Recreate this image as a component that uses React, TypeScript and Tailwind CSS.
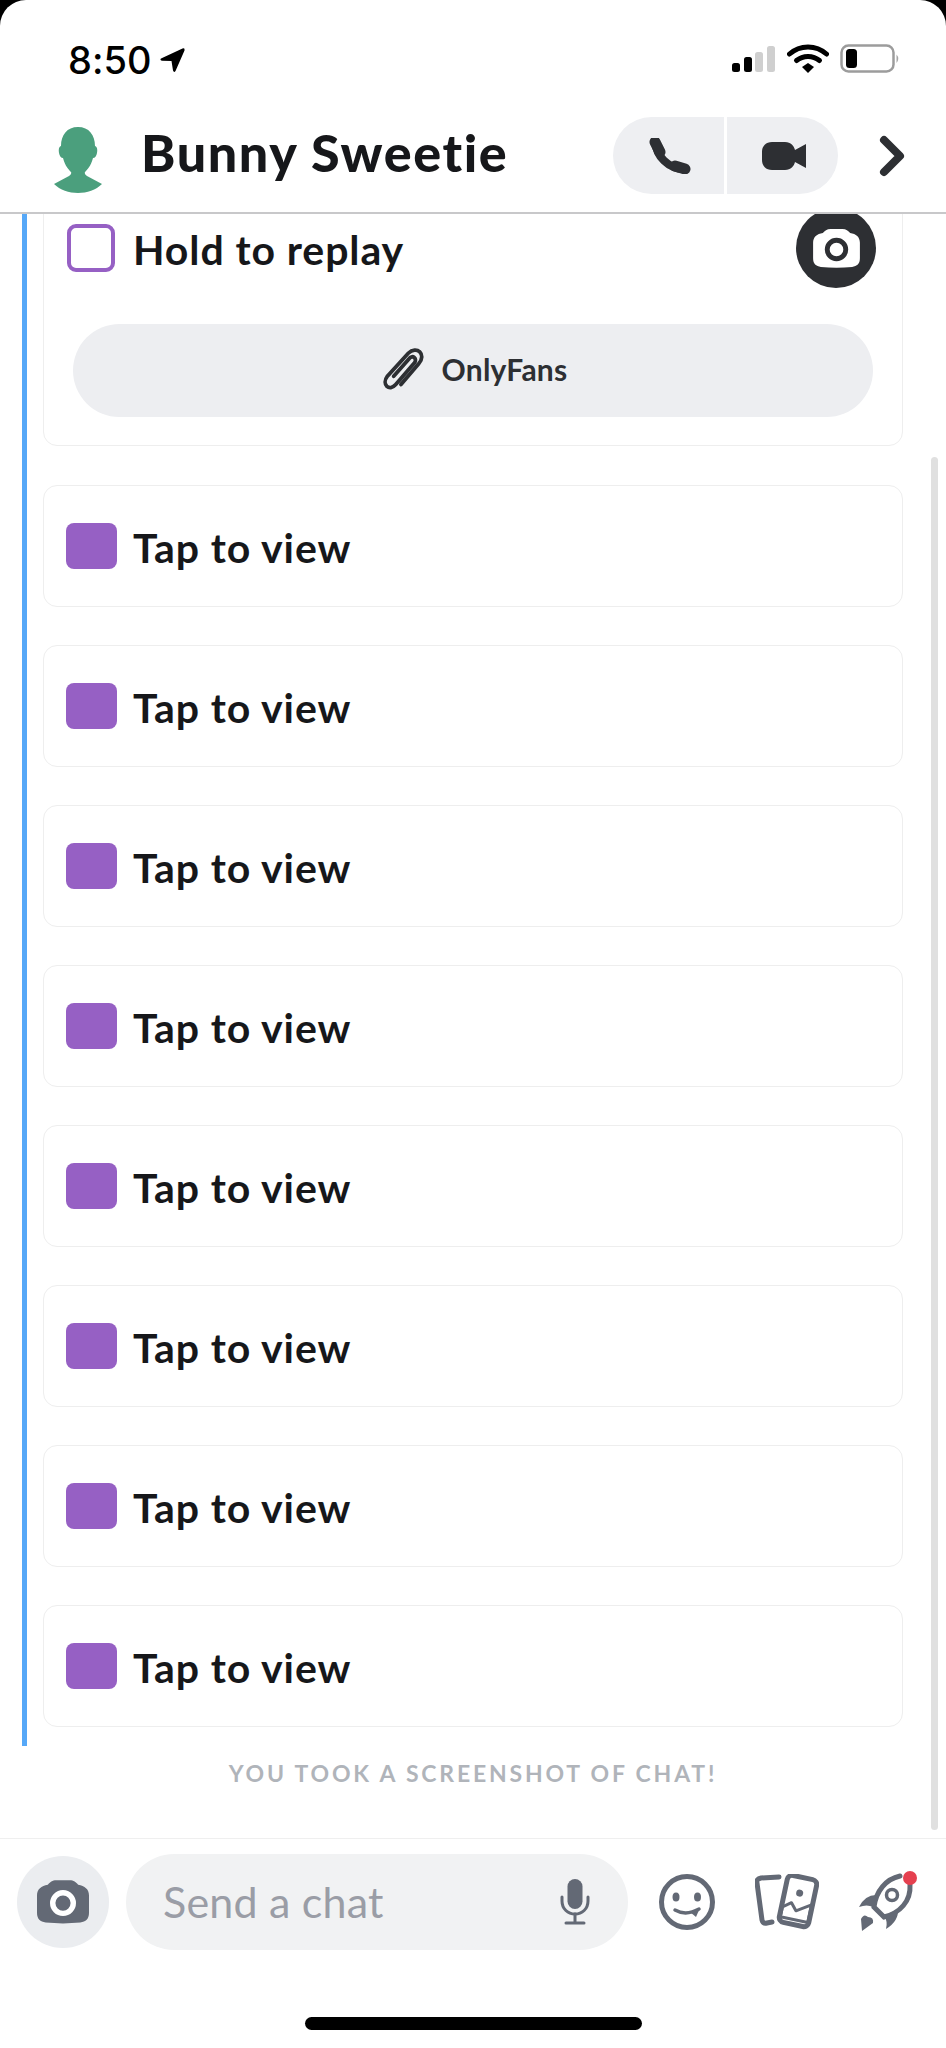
import React from "react";

const LocationArrow = () => (
  <svg width="26" height="26" viewBox="0 0 26 26" className="ml-[9px]">
    <path d="M1 11.500 L22.500 1.500 Q25 0.800 24.500 3.500 L15.500 24 Q14 26 13 23.500 L11.500 14 L2 13.800 Q-0.500 12.800 1 11.500Z" fill="#000" />
  </svg>
);

const StatusIcons = () => (
  <div className="flex items-center">
    <svg width="44" height="28" viewBox="0 0 44 28">
      <rect x="0" y="18" width="8" height="9" rx="2.500" fill="#000" />
      <rect x="12" y="12" width="8" height="15" rx="2.500" fill="#000" />
      <rect x="23" y="7" width="8" height="20" rx="2.500" fill="#cfcfcf" />
      <rect x="35" y="1" width="8" height="26" rx="2.500" fill="#cfcfcf" />
    </svg>
    <svg width="42" height="30" viewBox="0 0 42 30" className="ml-[11px]">
      <path d="M2.500 10 C13 0.500 29 0.500 39.500 10" fill="none" stroke="#000" strokeWidth="5" strokeLinecap="round" />
      <path d="M9.500 16.500 C16 11 26 11 32.500 16.500" fill="none" stroke="#000" strokeWidth="5" strokeLinecap="round" />
      <path d="M15 23 L21 19 L27 23 L21 29Z" fill="#000" />
    </svg>
    <svg width="62" height="30" viewBox="0 0 62 30" className="ml-[11px]">
      <rect x="1.500" y="1.500" width="52" height="26" rx="7" fill="none" stroke="#9c9c9c" strokeWidth="2.500" />
      <rect x="6" y="5" width="11" height="19" rx="3.500" fill="#000" />
      <path d="M56.500 10.500 Q60 14.500 56.500 19Z" fill="#a5a5a5" />
    </svg>
  </div>
);

const Avatar = () => (
  <svg width="48" height="66" viewBox="0 0 48 66" className="mt-[8px] shrink-0">
    <path d="M24 0 C35 0 41 8 41 19 Q44 20 43 26 Q42 31 39 31 C37 39 33 43 31 45 Q30 47 33 49 L48 57 C36 69 12 69 0 57 L15 49 Q18 47 17 45 C15 43 11 39 9 31 Q6 31 5 26 Q4 20 7 19 C7 8 13 0 24 0Z" fill="#4b9f7d" />
  </svg>
);

const PhoneIcon = () => (
  <svg width="42" height="36" viewBox="0 0 42 36">
    <path d="M7 6 C7 17 19 31 35 31" fill="none" stroke="#2d2f33" strokeWidth="8" strokeLinecap="round" />
    <path d="M6 4 L11 14" fill="none" stroke="#2d2f33" strokeWidth="11" strokeLinecap="round" />
    <path d="M26 28 L36 31" fill="none" stroke="#2d2f33" strokeWidth="11" strokeLinecap="round" />
  </svg>
);

const VideoIcon = () => (
  <svg width="44" height="28" viewBox="0 0 44 28">
    <path d="M10 0 H23 C29 0 32 4 33 8 L44 2 V26 L33 20 C32 24 29 28 23 28 H10 C4 28 0 24 0 18 V10 C0 4 4 0 10 0Z" fill="#2d2f33" />
  </svg>
);

const Chevron = () => (
  <svg width="26" height="42" viewBox="0 0 26 42">
    <path d="M5 5 L21 21 L5 37" fill="none" stroke="#2d2f33" strokeWidth="8" strokeLinecap="round" strokeLinejoin="round" />
  </svg>
);

const CameraGlyph = ({ body, hole, w, h }: { body: string; hole: string; w: number; h: number }) => (
  <svg width={w} height={h} viewBox="0 0 48 40">
    <path d="M18 0 H30 C34 0 36 2 38 4 C44 5 48 8 48 14 V30 C48 36 45 38 40 39 Q24 40.500 8 39 C3 38 0 36 0 30 V14 C0 8 4 5 10 4 C12 2 14 0 18 0Z" fill={body} />
    <circle cx="24" cy="21" r="9.500" fill="none" stroke={hole} strokeWidth="5" />
  </svg>
);

const Paperclip = () => (
  <svg width="46" height="48" viewBox="0 0 44 46">
    <path d="M14 28 L29 11 C32 7 37 11 34 15 L16 36 C10 43 2 36 8 28 L28 6 C36 -2 46 7 38 16 L21 36" fill="none" stroke="#2d2f33" strokeWidth="3.600" strokeLinecap="round" />
  </svg>
);

const Mic = () => (
  <svg width="30" height="46" viewBox="0 0 30 46">
    <rect x="7.500" y="0" width="15" height="30" rx="7.500" fill="#636975" />
    <path d="M2 18 V22 C2 30 8 35 15 35 C22 35 28 30 28 22 V18" fill="none" stroke="#636975" strokeWidth="3" strokeLinecap="round" />
    <path d="M15 35 V44 M6 44 H24" fill="none" stroke="#636975" strokeWidth="3" strokeLinecap="round" />
  </svg>
);

const Smiley = () => (
  <svg width="58" height="58" viewBox="0 0 58 58">
    <circle cx="29" cy="29" r="25.500" fill="none" stroke="#636975" strokeWidth="5" />
    <ellipse cx="18" cy="24" rx="3.500" ry="4.500" fill="#636975" />
    <ellipse cx="39.500" cy="24" rx="3.500" ry="4.500" fill="#636975" />
    <path d="M17 37 C24 41 32 41 41 36" fill="none" stroke="#636975" strokeWidth="3.500" strokeLinecap="round" />
    <path d="M32 39 L42 35 L38 44Z" fill="#636975" />
  </svg>
);

const Cards = () => (
  <svg width="64" height="56" viewBox="0 0 64 56">
    <path d="M24 3 L6 4 Q1 5 2 9 L7 46 Q8 50 12 49 L17 48" fill="none" stroke="#636975" strokeWidth="5" strokeLinecap="round" strokeLinejoin="round" />
    <g transform="rotate(12 43 27)">
      <rect x="28" y="3" width="30" height="48" rx="5" fill="none" stroke="#636975" strokeWidth="5" />
      <circle cx="43" cy="19" r="3.500" fill="#636975" />
      <path d="M29 36 L37 30 L43 37 L57 28 V46 H29Z" fill="none" stroke="#636975" strokeWidth="3" strokeLinejoin="round" />
    </g>
  </svg>
);

const Rocket = () => (
  <div className="relative h-[62px] w-[60px]">
    <svg width="60" height="62" viewBox="0 0 60 62">
      <path d="M42 5 C28 8 18 20 16 36 L26 46 C42 42 53 30 52 14" fill="none" stroke="#636975" strokeWidth="5" strokeLinecap="round" />
      <circle cx="34" cy="24" r="5.500" fill="none" stroke="#636975" strokeWidth="3.500" />
      <path d="M18 24 Q7 24 1 36 Q9 33 15 36Z" fill="#636975" />
      <path d="M40 38 Q41 50 28 58 Q30 50 26 45Z" fill="#636975" />
      <path d="M4 60 L3 48 Q6 42 10 46 Q16 46 15 52Z" fill="#636975" />
    </svg>
    <div className="absolute top-[0px] right-[1px] h-[14px] w-[14px] rounded-full bg-[#e5404f]" />
  </div>
);

const TapCard = () => (
  <div className="flex h-[122px] items-center rounded-[14px] border border-[#eeeeee] bg-white pl-[22px]">
    <div className="h-[46px] w-[51px] rounded-[8px] bg-[#9660c4]" />
    <span className="ml-[16px] pt-[4px] text-[41px] font-bold tracking-[0.9px] text-[#16171a]">Tap to view</span>
  </div>
);

export default function App() {
  const cards = [1, 2, 3, 4, 5, 6, 7, 8];
  return (
    <div className="h-[2048px] w-[946px] overflow-hidden bg-black [font-family:Lato,sans-serif] [font-variant-ligatures:none]">
      <div className="relative flex h-full flex-col overflow-hidden rounded-t-[26px] bg-white">
        {/* top bars */}
        <div className="h-[214px] shrink-0 border-b-2 border-[#c8c8ca]">
          <div className="flex h-[117px] items-start justify-between pt-[44px] pr-[44px] pl-[68px]">
            <div className="-mt-[2px] flex items-center">
              <span className="text-[38px] leading-[36px] font-medium text-black [font-family:Inter,sans-serif]">8:50</span>
              <LocationArrow />
            </div>
            <StatusIcons />
          </div>
          <div className="flex h-[77px] items-center pr-[41px] pl-[54px]">
            <Avatar />
            <h1 className="ml-[39px] pb-[7px] text-[52px] font-black tracking-[1.600px] text-[#16171a]">Bunny Sweetie</h1>
            <div className="ml-auto flex h-[77px] w-[225px] overflow-hidden rounded-full">
              <div className="flex w-[111px] items-center justify-center bg-[#eeeff2] pl-[2px]">
                <PhoneIcon />
              </div>
              <div className="ml-[3px] flex flex-1 items-center justify-center bg-[#eeeff2] pl-[2px]">
                <VideoIcon />
              </div>
            </div>
            <div className="ml-[41px]">
              <Chevron />
            </div>
          </div>
        </div>

        {/* messages */}
        <div className="relative min-h-0 flex-1 overflow-hidden">
          <div className="ml-[22px] border-l-[5px] border-[#56a8f8] pr-[43px] pl-[16px]">
            <div className="relative -mt-[30px] h-[262px] rounded-[14px] border border-[#eeeeee] bg-white">
              <div className="flex items-center pt-[23px] pl-[23px]">
                <div className="h-[48px] w-[48px] rounded-[9px] border-[4px] border-[#9660c4]" />
                <span className="ml-[18px] pt-[4px] text-[41px] font-bold tracking-[0.9px] text-[#16171a]">Hold to replay</span>
                <div className="mr-[26px] ml-auto flex h-[80px] w-[80px] items-center justify-center rounded-full bg-[#2d2f33]">
                  <CameraGlyph body="#ffffff" hole="#2d2f33" w={47} h={39} />
                </div>
              </div>
              <div className="mx-[29px] mt-[36px] flex h-[93px] items-center justify-center rounded-full bg-[#edeef1]">
                <Paperclip />
                <span className="ml-[17px] pb-[2px] text-[30px] font-bold tracking-[0.2px] text-[#2d2f33]">OnlyFans</span>
              </div>
            </div>
            <div className="mt-[39px] flex flex-col gap-[38px] pb-[19px]">
              {cards.map((c) => (
                <TapCard key={c} />
              ))}
            </div>
          </div>
          <p className="mt-[10px] text-center text-[23px] font-bold tracking-[2.800px] text-[#b0b4ba]">
            YOU TOOK A SCREENSHOT OF CHAT!
          </p>
          {/* scrollbar */}
          <div className="absolute top-[243px] right-[8px] h-[1373px] w-[7px] rounded-full bg-[#e0e0e0]" />
        </div>

        {/* footer */}
        <div className="h-[210px] shrink-0 border-t border-[#efefef]">
          <div className="flex items-center pt-[15px] pl-[17px]">
            <div className="flex h-[92px] w-[92px] items-center justify-center rounded-full bg-[#ebedf0]">
              <CameraGlyph body="#636975" hole="#ffffff" w={52} h={46} />
            </div>
            <div className="ml-[17px] flex h-[96px] w-[502px] items-center justify-between rounded-full bg-[#f1f2f3] pr-[38px] pl-[37px]">
              <span className="text-[43px] tracking-[0.2px] text-[#9a9da6]">Send a chat</span>
              <Mic />
            </div>
            <div className="ml-[30px]">
              <Smiley />
            </div>
            <div className="ml-[39px]">
              <Cards />
            </div>
            <div className="ml-[39px]">
              <Rocket />
            </div>
          </div>
          <div className="mx-auto mt-[67px] h-[13px] w-[337px] rounded-full bg-black" />
        </div>
      </div>
    </div>
  );
}
